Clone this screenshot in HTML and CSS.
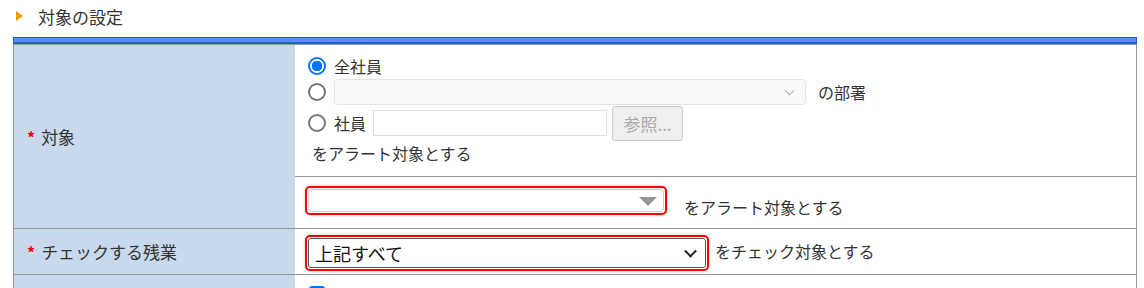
FILE: index.html
```html
<!doctype html>
<html lang="ja">
  <head>
    <meta charset="UTF-8" />
    <title>対象の設定</title>
    <link rel="stylesheet" href="styles.css">
  </head>
  <body>
    <div class="section-title">
      <span class="arrow"></span>
      <span>対象の設定</span>
    </div>
    <div class="title-bar"></div>
    <table class="form-table">
      <tr class="row-target">
        <th rowspan="2"><span class="req">*</span>対象</th>
        <td>
          <div class="line">
            <span class="radio checked"></span>
            <span>全社員</span>
          </div>
          <div class="line">
            <span class="radio"></span>
            <span class="dept-select"><span class="chev small"></span></span>
            <span class="after">の部署</span>
          </div>
          <div class="line line-emp">
            <span class="radio"></span>
            <span>社員</span>
            <span class="emp-input"></span>
            <span class="ref-btn">参照...</span>
          </div>
          <div class="line note">をアラート対象とする</div>
        </td>
      </tr>
      <tr class="row-alert">
        <td>
          <div class="line">
            <span class="hl hl-alert"><span class="tri"></span></span>
            <span class="after2">をアラート対象とする</span>
          </div>
        </td>
      </tr>
      <tr class="row-check">
        <th><span class="req">*</span>チェックする残業</th>
        <td>
          <div class="line">
            <span class="hl hl-check">
              <span class="sel">上記すべて<span class="chev"></span></span>
            </span>
            <span class="after3">をチェック対象とする</span>
          </div>
        </td>
      </tr>
      <tr class="row-next">
        <th></th>
        <td>
          <div class="check-line">
            <span class="box"></span><span class="box-label">すべて</span>
          </div>
        </td>
      </tr>
    </table>
  </body>
</html>
```

FILE: styles.css
```css
body {
  margin: 0;
  background: #fff;
  font-family: "Noto Sans CJK JP", "Noto Sans", sans-serif;
  font-size: 16px;
  color: #333;
  overflow: hidden;
}

.section-title {
  height: 34px;
  display: flex;
  align-items: center;
  padding-left: 16px;
  font-size: 17px;
  margin-top: -1px;
}

.arrow {
  width: 0;
  height: 0;
  border-top: 5px solid transparent;
  border-bottom: 5px solid transparent;
  border-left: 7px solid #f39800;
  margin-right: 15px;
}

.title-bar {
  margin: 4px 7px 0 13px;
  height: 4px;
  background: #5b8ef0;
  border: 1px solid #1a5fd6;
  border-bottom-width: 2px;
}

.form-table {
  margin-left: 13px;
  width: 1124px;
  border-collapse: collapse;
  border-left: 1px solid #999;
  border-right: 1px solid #999;
}

.form-table th,
.form-table td {
  border-top: 1px solid #999;
  border-bottom: 1px solid #999;
  padding: 0;
}

.form-table th {
  width: 268px;
  background: #c8d9ee;
  text-align: left;
  font-weight: normal;
  font-size: 17px;
  padding-left: 13px;
  vertical-align: middle;
  color: #333;
}

.form-table td {
  padding-left: 14px;
  vertical-align: top;
}

.req {
  color: #f00;
  font-weight: bold;
  margin-right: 6px;
  font-size: 16px;
}

.row-target td {
  height: 132px;
  padding-top: 8px;
  box-sizing: border-box;
}

.line {
  display: flex;
  align-items: center;
  height: 26px;
  white-space: nowrap;
}

.line-emp {
  height: 36px;
}

.note {
  height: 24px;
  padding-left: 3px;
}

.radio {
  width: 14px;
  height: 14px;
  border: 2px solid #767676;
  border-radius: 50%;
  margin: 0 8px 0 -1px;
  box-sizing: content-box;
  flex: none;
}

.radio.checked {
  border-color: #0075ff;
  background: radial-gradient(circle, #0075ff 0 5px, #fff 5.5px);
}

.dept-select {
  width: 470px;
  height: 24px;
  border: 1px solid #e3e3e3;
  border-radius: 4px;
  background: #fafafa;
  position: relative;
  flex: none;
}

.chev {
  position: absolute;
  right: 10px;
  top: 50%;
  width: 7px;
  height: 7px;
  border-right: 2px solid #222;
  border-bottom: 2px solid #222;
  transform: translateY(-70%) rotate(45deg);
}

.chev.small {
  border-color: #aaa;
  width: 6px;
  height: 6px;
  border-width: 0 1.5px 1.5px 0;
  right: 12px;
}

.after {
  margin-left: 12px;
}

.emp-input {
  width: 232px;
  height: 24px;
  border: 1px solid #ddd;
  margin-left: 7px;
  flex: none;
}

.ref-btn {
  margin-left: 5px;
  width: 71px;
  height: 35px;
  border: 1px solid #ccc;
  border-radius: 3px;
  background: #efefef;
  color: #aaa;
  font-size: 17px;
  display: flex;
  align-items: center;
  justify-content: center;
  box-sizing: border-box;
}

.row-alert td {
  height: 52px;
  padding-top: 8px;
  box-sizing: border-box;
}

.hl {
  border: 2px solid #f00;
  border-radius: 5px;
  box-shadow: 0 0 3px rgba(0, 0, 0, 0.25);
  box-sizing: border-box;
  position: relative;
  flex: none;
  margin-left: -4px;
}

.hl-alert {
  width: 362px;
  height: 29px;
  background: #fff;
}

.hl-alert::after {
  content: "";
  position: absolute;
  inset: 1px;
  border: 1px solid #ccc;
  border-radius: 4px;
}

.tri {
  position: absolute;
  right: 8px;
  top: 9px;
  width: 0;
  height: 0;
  border-left: 9px solid transparent;
  border-right: 9px solid transparent;
  border-top: 9px solid #999;
}

.after2 {
  margin: 12px 0 0 17px;
}

.row-alert .line {
  height: 31px;
}

.row-check td {
  height: 46px;
  padding-top: 6px;
  box-sizing: border-box;
}

.row-check .line {
  height: 36px;
}

.hl-check {
  width: 404px;
  height: 36px;
  padding: 1px;
}

.sel {
  display: flex;
  align-items: center;
  height: 30px;
  border: 1px solid #555;
  border-radius: 3px;
  padding-left: 6px;
  font-size: 18px;
  color: #111;
  position: relative;
  box-sizing: border-box;
  background: #fff;
}

.after3 {
  margin: -5px 0 0 6px;
}

.row-next td {
  padding-top: 9px;
}

.check-line {
  display: flex;
  align-items: center;
  height: 20px;
}

.box {
  width: 16px;
  height: 16px;
  border-radius: 3px;
  background: #0075ff;
  flex: none;
}

.box-label {
  margin-left: 8px;
}
```
